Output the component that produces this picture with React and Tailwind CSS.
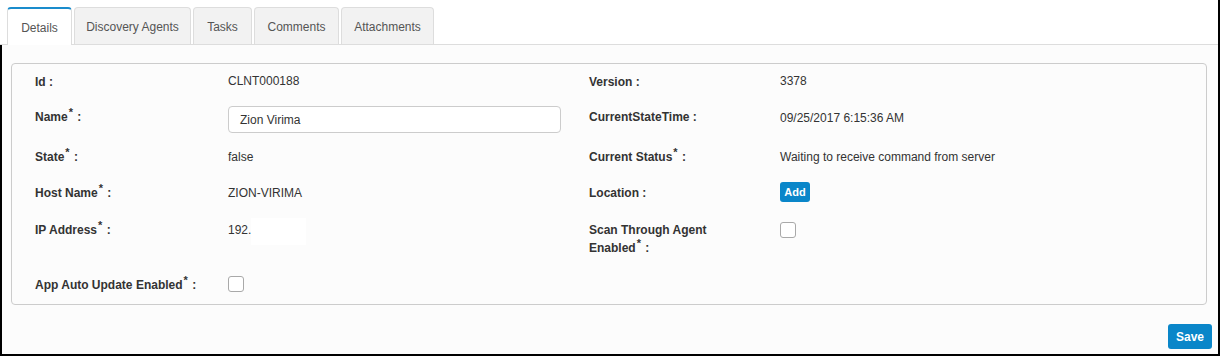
import React from "react";

const font = { fontFamily: '"Liberation Sans", Arial, sans-serif' };

function Star() {
  return <span className="inline-block text-[11px] leading-[10px] align-top relative top-[-1px] ml-[1px] mr-[1px]">*</span>;
}

function Label({ children }) {
  return <div className="font-bold text-[12px] leading-[18px] text-[#333]">{children}</div>;
}

function Value({ children }) {
  return <div className="text-[12px] leading-[16px] text-[#333]">{children}</div>;
}

function Checkbox() {
  return <div className="w-[16px] h-[16px] border border-[#a9a9a9] rounded-[3px] bg-white" />;
}

function Row({ h, children }) {
  return <div className={`grid grid-cols-[193px_361px_191px_1fr] items-start ${h}`}>{children}</div>;
}

export default function App() {
  const tabs = [
    ["Discovery Agents", "w-[117px]"],
    ["Tasks", "w-[59px]"],
    ["Comments", "w-[85px]"],
    ["Attachments", "w-[93px]"],
  ];
  return (
    <div style={font} className="w-[1220px] h-[356px] bg-white border-r-2 border-black flex flex-col overflow-hidden">
      <div className="h-[45px] flex items-end pl-[7px] border-b border-[#dddddd] bg-white shrink-0">
        <div className="h-[38px] w-[65px] bg-white border-t-2 border-[#1a8ccc] border-x border-x-[#dddddd] rounded-t-[4px] mb-[-1px] flex items-center justify-center text-[12px] text-[#555] pt-[1px]">
          Details
        </div>
        {tabs.map(([t, w]) => (
          <div
            key={t}
            className={`h-[37px] ml-[2px] bg-[#f2f2f2] border border-[#dddddd] border-b-0 rounded-t-[4px] flex items-center justify-center text-[12px] text-[#555] pt-[2px] ${w}`}
          >
            {t}
          </div>
        ))}
      </div>
      <div className="flex-1 border-l-2 border-b-2 border-black bg-[#fcfcfc] flex flex-col pl-[9px] pr-[11px] pt-[18px]">
        <div className="border border-[#cccccc] rounded-[4px] pl-[23px] h-[242px]">
          <Row h="h-[36px] pt-[9px]">
            <Label>Id :</Label>
            <Value>CLNT000188</Value>
            <Label>Version :</Label>
            <Value>3378</Value>
          </Row>
          <Row h="h-[40px] pt-[6px]">
            <div className="pt-[2px]"><Label>Name<Star /> :</Label></div>
            <div className="w-[333px] h-[27px] border border-[#cccccc] rounded-[4px] bg-white flex items-center px-[11px] text-[12px] text-[#333]">
              Zion Virima
            </div>
            <div className="pt-[2px]"><Label>CurrentStateTime :</Label></div>
            <div className="pt-[4px]"><Value>09/25/2017 6:15:36 AM</Value></div>
          </Row>
          <Row h="h-[36px] pt-[8px]">
            <Label>State<Star /> :</Label>
            <div className="pt-[1px]"><Value>false</Value></div>
            <Label>Current Status<Star /> :</Label>
            <div className="pt-[1px]"><Value>Waiting to receive command from server</Value></div>
          </Row>
          <Row h="h-[36px] pt-[6px]">
            <div className="pt-[2px]"><Label>Host Name<Star /> :</Label></div>
            <div className="pt-[3px]"><Value>ZION-VIRIMA</Value></div>
            <div className="pt-[2px]"><Label>Location :</Label></div>
            <button className="w-[30px] h-[20px] rounded-[3px] bg-[#0a86c9] text-white text-[11px] font-bold leading-none">
              Add
            </button>
          </Row>
          <Row h="h-[56px] pt-[9px]">
            <Label>IP Address<Star /> :</Label>
            <div className="flex items-start">
              <div className="pt-[1px]"><Value>192.</Value></div>
              <div className="w-[55px] h-[27px] bg-white mt-[-3px]" />
            </div>
            <div className="w-[150px]"><Label>Scan Through Agent Enabled<Star /> :</Label></div>
            <div className="pt-[1px]"><Checkbox /></div>
          </Row>
          <Row h="h-[36px] pt-[7px]">
            <div className="pt-[1px]"><Label>App Auto Update Enabled<Star /> :</Label></div>
            <div className="pt-[1px]"><Checkbox /></div>
            <div />
            <div />
          </Row>
        </div>
        <div className="flex justify-end mt-[19px] mr-[-5px]">
          <button className="w-[44px] h-[25px] rounded-[3px] bg-[#0a86c9] text-white text-[12px] font-bold">
            Save
          </button>
        </div>
      </div>
    </div>
  );
}
